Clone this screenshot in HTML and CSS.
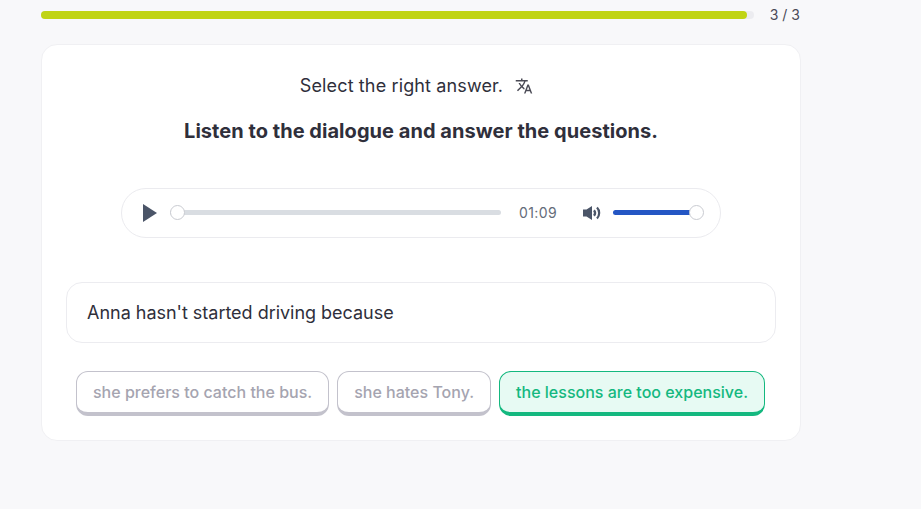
FILE: index.html
```html
<!DOCTYPE html>
<html>
	<head>
		<meta charset="UTF-8">
		<title>Listening exercise</title>
		<link rel="stylesheet" href="styles.css">
	</head>
	<body>
		<div class="page">
			<div class="progress-row">
				<div class="progress-track">
					<div class="progress-fill" style="width: 99%"></div>
				</div>
				<span class="progress-count">3 / 3</span>
			</div>
			<div class="card">
				<div class="instruction">
					<span>Select the right answer.</span>
					<svg class="translate-icon" viewBox="0 0 24 24" width="18" height="18">
						<path d="M12.87 15.07l-2.54-2.51.03-.03c1.74-1.94 2.98-4.17 3.71-6.53H17V4h-7V2H8v2H1v1.99h11.17C11.5 7.92 10.44 9.75 9 11.35 8.07 10.32 7.3 9.19 6.69 8h-2c.73 1.63 1.73 3.17 2.98 4.56l-5.09 5.02L4 19l5-5 3.11 3.11.76-2.04zM18.5 10h-2L12 22h2l1.12-3h4.75L21 22h2l-4.5-12zm-2.62 7l1.62-4.33L19.12 17h-3.24z"/>
					</svg>
				</div>
				<h2 class="title">Listen to the dialogue and answer the questions.</h2>
				<div class="player">
					<svg class="play-icon" viewBox="0 0 14 18" width="14" height="18">
						<path d="M0 0 14 9 0 18z"/>
					</svg>
					<div class="seek">
						<span class="thumb thumb-start"></span>
					</div>
					<span class="time">01:09</span>
					<svg class="volume-icon" viewBox="0 0 18 16" width="18" height="16">
						<path d="M0 4.500h3.500L9 1v14l-5.500-3.500H0z"/>
						<path class="wave" d="M11 5.200c1.300 1.600 1.300 4 0 5.600M14 2.600c2.900 3 2.900 7.800 0 10.800"/>
					</svg>
					<div class="volume">
						<div class="volume-fill"></div>
						<span class="thumb thumb-end"></span>
					</div>
				</div>
				<div class="question">Anna hasn't started driving because</div>
				<div class="answers">
					<button class="answer">she prefers to catch the bus.</button>
					<button class="answer">she hates Tony.</button>
					<button class="answer answer-right">the lessons are too expensive.</button>
				</div>
			</div>
		</div>
	</body>
</html>
```

FILE: styles.css
```css
* {
	box-sizing: border-box;
}
body {
	margin: 0;
	background: #f8f8fa;
	color: #2f2f3b;
	font-family: Inter, "Liberation Sans", sans-serif;
}
.page {
	width: 760px;
	margin-left: 41px;
}
.progress-row {
	display: flex;
	align-items: center;
	height: 30px;
	margin-bottom: 14px;
}
.progress-track {
	width: 713px;
	height: 8px;
	border-radius: 4px;
	background: #ececf0;
}
.progress-fill {
	height: 100%;
	border-radius: 4px;
	background: #c0d414;
}
.progress-count {
	margin-left: auto;
	padding: 0 1px 2px 0;
	font-size: 14px;
	color: #4a4a58;
}
.card {
	height: 397px;
	padding: 0 24px;
	border: 1px solid #f0f0f3;
	border-radius: 16px;
	background: #fff;
}
.instruction {
	display: flex;
	justify-content: center;
	align-items: center;
	gap: 12px;
	height: 26px;
	margin-top: 27px;
	padding-right: 9px;
	font-size: 18px;
	letter-spacing: 0.13px;
}
.translate-icon {
	margin-top: 2px;
	fill: #4a4a55;
}
.title {
	height: 26px;
	margin: 20px 0 0;
	font-size: 20px;
	font-weight: 700;
	line-height: 26px;
	letter-spacing: 0.04px;
	text-align: center;
}
.player {
	display: flex;
	align-items: center;
	width: 600px;
	height: 50px;
	margin: 44px auto 0;
	padding-left: 21px;
	border: 1px solid #ebebef;
	border-radius: 25px;
}
.play-icon {
	fill: #4b5568;
	margin-right: 13px;
}
.seek {
	position: relative;
	width: 331px;
	height: 5px;
	margin-right: 18px;
	margin-bottom: 1px;
	border-radius: 3px;
	background: #d9dde2;
}
.thumb {
	position: absolute;
	top: -5px;
	width: 15px;
	height: 15px;
	border: 1px solid #c9cbd1;
	border-radius: 50%;
	background: #fff;
}
.thumb-start {
	left: 0;
}
.thumb-end {
	right: 0;
}
.time {
	width: 38px;
	margin-right: 26px;
	padding-bottom: 1px;
	font-size: 14px;
	letter-spacing: 0.4px;
	color: #646c79;
}
.volume-icon {
	fill: #4b5568;
	margin-right: 12px;
}
.wave {
	fill: none;
	stroke: #4b5568;
	stroke-width: 2.2;
}
.volume {
	position: relative;
	width: 91px;
	height: 5px;
	margin-bottom: 1px;
}
.volume-fill {
	width: 84px;
	height: 100%;
	border-radius: 3px;
	background: #2456c4;
}
.question {
	display: flex;
	align-items: center;
	height: 61px;
	margin-top: 44px;
	padding: 0 20px;
	border: 1px solid #ececf0;
	border-radius: 16px;
	font-size: 18px;
	letter-spacing: -0.02px;
}
.answers {
	display: flex;
	justify-content: center;
	gap: 8px;
	margin-top: 28px;
	padding-right: 1px;
}
.answer {
	height: 45px;
	padding: 0 16px;
	border: 1px solid #c3c2cc;
	border-bottom-width: 4px;
	border-radius: 12px;
	background: #fff;
	color: #a5a4b0;
	font-family: inherit;
	font-size: 16px;
	font-weight: 500;
	letter-spacing: 0.005px;
}
.answer-right {
	border-color: #14b87f;
	background: #e7faf3;
	color: #14b87f;
}
```
